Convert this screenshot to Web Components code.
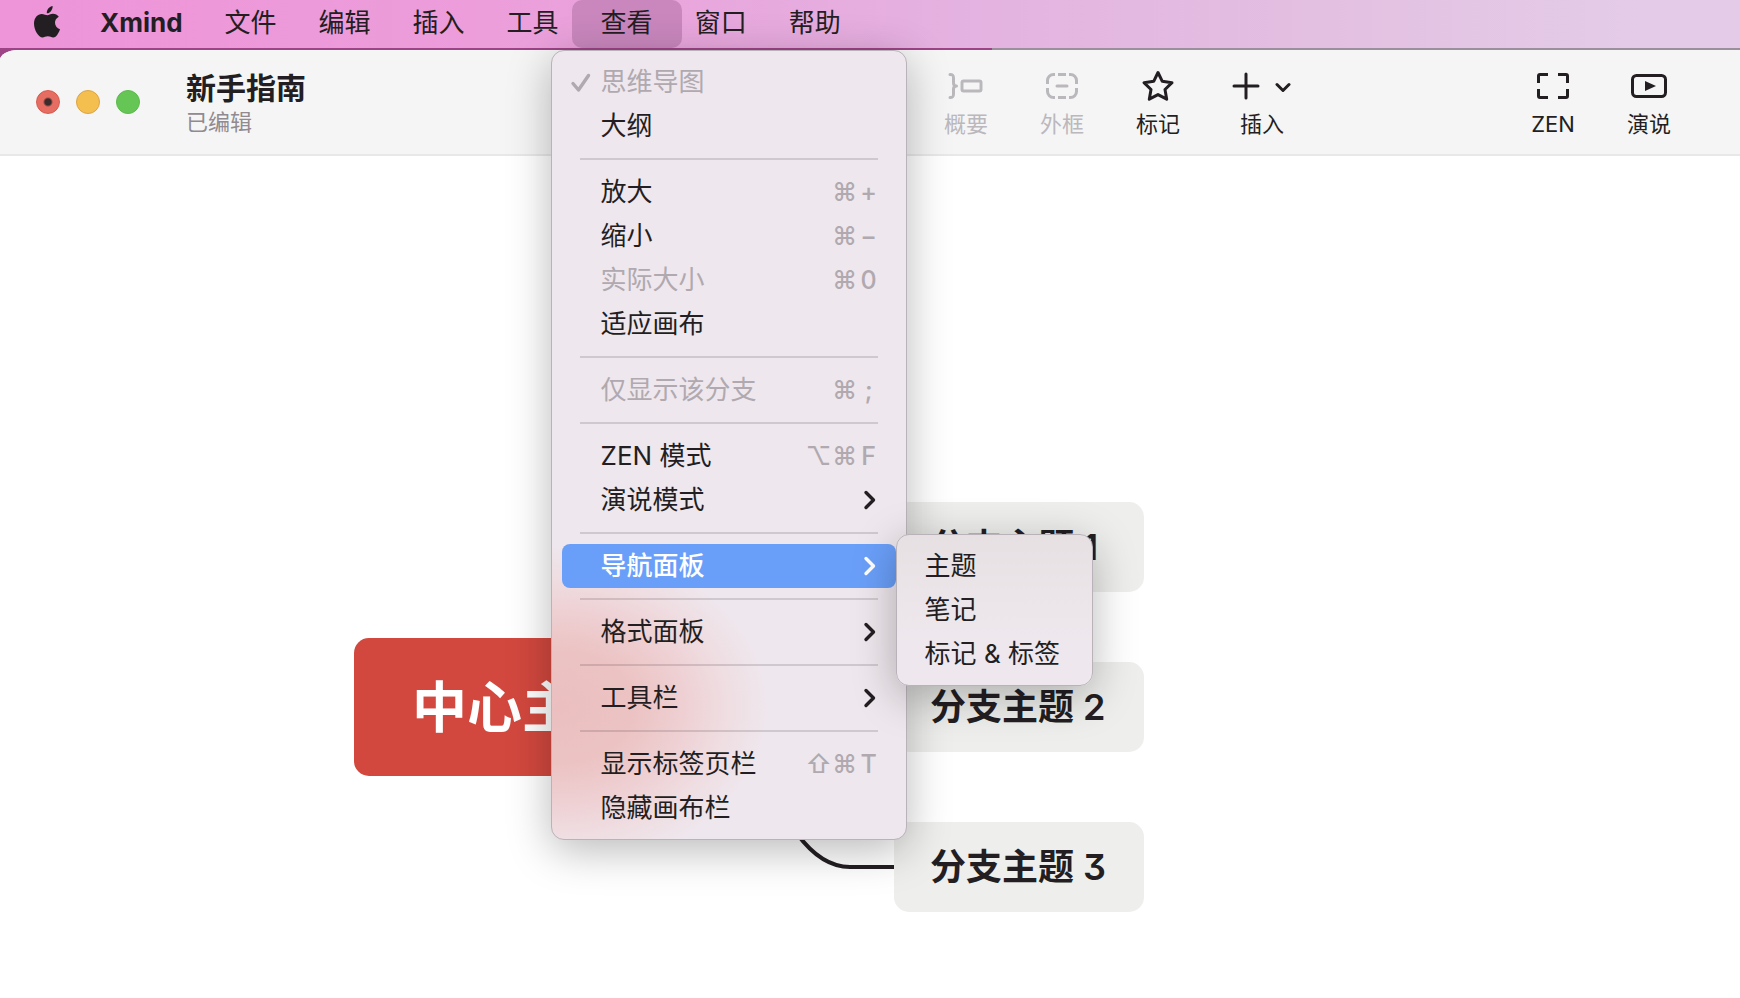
<!DOCTYPE html>
<html lang="zh-CN">
    <head>
        <meta charset="utf-8">
        <title>Xmind</title>
        <style>
            html, body {
                height: 100%;
            }
            body {
                margin: 0;
                display: flex;
                flex-direction: column;
                overflow: hidden;
                font-family: Inter, "Noto Sans CJK SC", sans-serif;
                color: #231e22;
                background: linear-gradient(to right, #9c4486 57%, #9a8f9b 57%);
            }
        </style>
    </head>
    <body>
        <menu-bar>
            <bar-item label="Xmind" strong></bar-item>
            <bar-item label="文件"></bar-item>
            <bar-item label="编辑"></bar-item>
            <bar-item label="插入"></bar-item>
            <bar-item label="工具"></bar-item>
            <bar-item label="查看" open>
                <pop-menu>
                    <menu-row checked disabled>思维导图</menu-row>
                    <menu-row>大纲</menu-row>
                    <menu-rule></menu-rule>
                    <menu-row keys="⌘ +">放大</menu-row>
                    <menu-row keys="⌘ −">缩小</menu-row>
                    <menu-row keys="⌘ 0" disabled>实际大小</menu-row>
                    <menu-row>适应画布</menu-row>
                    <menu-rule></menu-rule>
                    <menu-row keys="⌘ ;" disabled>仅显示该分支</menu-row>
                    <menu-rule></menu-rule>
                    <menu-row keys="⌥ ⌘ F">ZEN 模式</menu-row>
                    <menu-row parent>演说模式</menu-row>
                    <menu-rule></menu-rule>
                    <menu-row parent active>导航面板
                        <pop-menu slot="submenu" nested>
                            <menu-row>主题</menu-row>
                            <menu-row>笔记</menu-row>
                            <menu-row>标记 &amp; 标签</menu-row>
                        </pop-menu>
                    </menu-row>
                    <menu-rule></menu-rule>
                    <menu-row parent>格式面板</menu-row>
                    <menu-rule></menu-rule>
                    <menu-row parent>工具栏</menu-row>
                    <menu-rule></menu-rule>
                    <menu-row keys="⇧ ⌘ T">显示标签页栏</menu-row>
                    <menu-row>隐藏画布栏</menu-row>
                </pop-menu>
            </bar-item>
            <bar-item label="窗口"></bar-item>
            <bar-item label="帮助"></bar-item>
        </menu-bar>

        <app-window>
            <window-title slot="title" name="新手指南" state="已编辑"></window-title>
            <tool-button slot="tools" icon="summary" label="概要" disabled></tool-button>
            <tool-button slot="tools" icon="boundary" label="外框" disabled></tool-button>
            <tool-button slot="tools" icon="marker" label="标记"></tool-button>
            <tool-button slot="tools" icon="insert" label="插入" wide></tool-button>
            <tool-button slot="modes" icon="zen" label="ZEN"></tool-button>
            <tool-button slot="modes" icon="pitch" label="演说"></tool-button>
            <mind-canvas>
                <topic-node central style="left: 354px; top: 482px">中心主题</topic-node>
                <topic-node style="left: 894px; top: 346px">分支主题 1</topic-node>
                <topic-node style="left: 894px; top: 506px">分支主题 2</topic-node>
                <topic-node style="left: 894px; top: 666px">分支主题 3</topic-node>
            </mind-canvas>
        </app-window>

        <script>
            const ICONS = {
                summary: `<svg width="36" height="32" fill="none" stroke="currentColor" stroke-width="3" stroke-linecap="round" stroke-linejoin="round">
                    <path d="M2 4.500C5 4.500 5.500 5.500 5.500 8V13C5.500 15 6 16 8.500 16C6 16 5.500 17 5.500 19V24C5.500 26.500 5 27.500 2 27.500"/>
                    <rect x="14" y="11" width="19" height="10" rx="1.500"/></svg>`,
                boundary: `<svg width="36" height="32" fill="none" stroke="currentColor" stroke-width="3">
                    <path d="M3.500 14V10.500A6 6 0 0 1 9.500 4.500H11M14 4.500H22M25 4.500H26.500A6 6 0 0 1 32.500 10.500V14M32.500 18V21.500A6 6 0 0 1 26.500 27.500H25M22 27.500H14M11 27.500H9.500A6 6 0 0 1 3.500 21.500V18"/>
                    <path d="M13 16H23" stroke-linecap="round"/></svg>`,
                marker: `<svg width="36" height="32" fill="none" stroke="currentColor" stroke-width="3" stroke-linejoin="round">
                    <path d="M18 2.500L22.300 11.300L32 12.700L25 19.500L26.700 29.200L18 24.600L9.300 29.200L11 19.500L4 12.700L13.700 11.300Z"/></svg>`,
                insert: `<svg width="60" height="32" fill="none" stroke="currentColor" stroke-width="3" stroke-linecap="round" stroke-linejoin="round">
                    <path d="M2 16H26M14 4V28M45 14.500L51 20.500L57 14.500"/></svg>`,
                zen: `<svg width="36" height="32" fill="none" stroke="currentColor" stroke-width="3" stroke-linejoin="round">
                    <path d="M3.500 13V6A1.500 1.500 0 0 1 5 4.500H13M23 4.500H31A1.500 1.500 0 0 1 32.500 6V13M32.500 19V26A1.500 1.500 0 0 1 31 27.500H23M13 27.500H5A1.500 1.500 0 0 1 3.500 26V19"/></svg>`,
                pitch: `<svg width="36" height="32" fill="none" stroke="currentColor" stroke-width="3">
                    <rect x="1.500" y="5.500" width="33" height="21" rx="4"/>
                    <path d="M14 11L25 16L14 21Z" fill="currentColor" stroke="none"/></svg>`
            };

            class MenuBar extends HTMLElement {
                constructor() {
                    super();
                    const shadowRoot = this.attachShadow({ mode: 'open' });
                    shadowRoot.innerHTML = `
                        <style>
                            :host {
                                display: flex;
                                align-items: stretch;
                                flex: none;
                                height: 48px;
                                position: relative;
                                z-index: 2;
                                background: linear-gradient(to right, #ee94d9, #ec9dda 27%, #e4b2e0 55%, #e3c1e2 78%, #e4cce8 95%);
                            }
                            .apple {
                                flex: none;
                                margin: 6px 19px 0 34px;
                                color: #231e22;
                            }
                        </style>
                        <svg class="apple" width="26" height="32" viewBox="0 0 26 32" fill="currentColor" role="img" aria-label="Apple">
                            <path d="M18.600 0C18.800 2 18 3.900 16.900 5.200C15.800 6.500 14.300 7.400 12.800 7.200C12.600 5.300 13.500 3.500 14.500 2.300C15.600 1 17.300 .1 18.600 0Z"/>
                            <path d="M13.400 9.200C14.700 9.200 16.400 7.700 18.900 7.700C21.300 7.700 23.500 8.900 24.800 10.800C22.300 12.300 21 14.200 21 16.700C21 19.600 22.900 22.100 26 23.200C25.100 25.900 22.500 31.500 19.200 31.500C17.300 31.500 16.300 30.300 13.900 30.300C11.400 30.300 10.300 31.500 8.600 31.500C4.600 31.500 0 24.300 0 17.500C0 11.400 3.800 7.900 7.600 7.900C10 7.900 12 9.200 13.400 9.200Z"/>
                        </svg>
                        <slot></slot>
                    `;
                }
            }
            window.customElements.define('menu-bar', MenuBar);

            class BarItem extends HTMLElement {
                constructor() {
                    super();
                    const shadowRoot = this.attachShadow({ mode: 'open' });
                    shadowRoot.innerHTML = `
                        <style>
                            :host {
                                display: block;
                                position: relative;
                                margin: 0 -8px;
                            }
                            button {
                                height: 100%;
                                padding: 0 29px 2px;
                                border: 0;
                                border-radius: 10px;
                                background: none;
                                color: inherit;
                                font: 400 26px/36px Inter, "Noto Sans CJK SC", sans-serif;
                                white-space: nowrap;
                            }
                            :host([strong]) button {
                                font-weight: 700;
                            }
                            :host([open]) button {
                                background: #c987bd;
                            }
                            ::slotted(pop-menu) {
                                position: absolute;
                                left: -21px;
                                top: 50px;
                            }
                        </style>
                        <button type="button">${this.getAttribute('label')}</button>
                        <slot></slot>
                    `;
                }
            }
            window.customElements.define('bar-item', BarItem);

            class PopMenu extends HTMLElement {
                constructor() {
                    super();
                    const shadowRoot = this.attachShadow({ mode: 'open' });
                    shadowRoot.innerHTML = `
                        <style>
                            :host {
                                display: block;
                                box-sizing: border-box;
                                width: 356px;
                                padding: 9px 10px;
                                border: 1px solid #b9b2b9;
                                border-radius: 13px;
                                /* the red topic glows through the frosted panel */
                                background:
                                    radial-gradient(ellipse 205px 160px at 10px 656px, #ebbfbf, #ecc3c3 35%, #eecfd2 58%, #efdce0 78%, rgba(238, 231, 237, 0)),
                                    #eee7ed;
                                box-shadow: 0 10px 44px rgba(0, 0, 0, .28);
                                color: #231e22;
                                --indent: 39px;
                            }
                            :host([nested]) {
                                width: max-content;
                                min-width: 197px;
                                background: linear-gradient(#e6e0e3, #ebe5e9 40%, #eee7ed 70%);
                                --indent: 18px;
                            }
                        </style>
                        <slot></slot>
                    `;
                }
            }
            window.customElements.define('pop-menu', PopMenu);

            class MenuRow extends HTMLElement {
                constructor() {
                    super();
                    const keys = (this.getAttribute('keys') || '').split(' ').filter(Boolean);
                    const shadowRoot = this.attachShadow({ mode: 'open' });
                    shadowRoot.innerHTML = `
                        <style>
                            :host {
                                display: block;
                                position: relative;
                            }
                            :host([active]) {
                                z-index: 1;
                            }
                            button {
                                display: flex;
                                align-items: center;
                                position: relative;
                                width: 100%;
                                height: 44px;
                                padding: 0 18px 0 var(--indent);
                                border: 0;
                                border-radius: 8px;
                                background: none;
                                color: inherit;
                                font: 400 26px/36px Inter, "Noto Sans CJK SC", sans-serif;
                                white-space: nowrap;
                            }
                            :host([disabled]) button {
                                color: #b0a9af;
                            }
                            :host([active]) button {
                                background: #6a9ff9;
                                color: #fff;
                                font-weight: 500;
                            }
                            .check {
                                position: absolute;
                                left: 8px;
                                top: 13px;
                            }
                            .keys {
                                display: flex;
                                margin-left: auto;
                                color: #b0a9af;
                            }
                            kbd {
                                width: 26px;
                                font: 500 25px/36px Inter, "DejaVu Sans", sans-serif;
                                text-align: center;
                            }
                            kbd:last-child {
                                display: flex;
                                justify-content: center;
                                width: 18px;
                                margin-left: 2px;
                            }
                            .arrow {
                                margin-left: auto;
                            }
                            ::slotted(pop-menu) {
                                position: absolute;
                                left: 100%;
                                top: -10px;
                            }
                        </style>
                        <button type="button" ${this.hasAttribute('disabled') ? 'disabled' : ''}>
                            ${this.hasAttribute('checked') ? `<svg class="check" width="22" height="20" fill="none" stroke="currentColor" stroke-width="3.400" stroke-linecap="round" stroke-linejoin="round"><path d="M3 10.500L8.500 17L18.500 2.500"/></svg>` : ''}
                            <slot></slot>
                            ${keys.length ? `<span class="keys">${keys.map(key => `<kbd>${key}</kbd>`).join('')}</span>` : ''}
                            ${this.hasAttribute('parent') ? `<svg class="arrow" width="16" height="20" fill="none" stroke="currentColor" stroke-width="3.400" stroke-linecap="round" stroke-linejoin="round"><path d="M4 2.500L11.500 10L4 17.500"/></svg>` : ''}
                        </button>
                        <slot name="submenu"></slot>
                    `;
                }
            }
            window.customElements.define('menu-row', MenuRow);

            class MenuRule extends HTMLElement {
                constructor() {
                    super();
                    const shadowRoot = this.attachShadow({ mode: 'open' });
                    shadowRoot.innerHTML = `
                        <style>
                            :host {
                                display: block;
                                padding: 10px 18px;
                            }
                            hr {
                                height: 2px;
                                margin: 0;
                                border: 0;
                                background: rgba(60, 50, 60, .17);
                            }
                        </style>
                        <hr>
                    `;
                }
            }
            window.customElements.define('menu-rule', MenuRule);

            class AppWindow extends HTMLElement {
                constructor() {
                    super();
                    const shadowRoot = this.attachShadow({ mode: 'open' });
                    shadowRoot.innerHTML = `
                        <style>
                            :host {
                                display: flex;
                                flex-direction: column;
                                flex: 1;
                                min-height: 0;
                                margin-top: 2px;
                                border-top-left-radius: 18px 10px;
                                overflow: hidden;
                                background: #fff;
                            }
                            header {
                                display: grid;
                                grid-template-columns: 1fr 1fr;
                                flex: none;
                                height: 104px;
                                border-bottom: 2px solid #e8e8e8;
                                background: #f5f5f5;
                            }
                            .start, .end {
                                display: flex;
                                align-items: center;
                            }
                            .start {
                                padding-left: 36px;
                            }
                            .end {
                                padding: 6px 43px 0 48px;
                            }
                            .modes {
                                display: flex;
                                margin-left: auto;
                            }
                            .lights {
                                display: flex;
                                gap: 16px;
                                margin-right: 46px;
                            }
                            .lights button {
                                box-sizing: border-box;
                                width: 24px;
                                height: 24px;
                                padding: 0;
                                border: 1px solid #d8584c;
                                border-radius: 50%;
                                background: radial-gradient(circle, #3b2b2b 3px, #e66d61 5px);
                            }
                            .lights .min {
                                border-color: #dba545;
                                background: #f5bf4f;
                            }
                            .lights .max {
                                border-color: #5bba4b;
                                background: #65c656;
                            }
                        </style>
                        <header>
                            <div class="start">
                                <div class="lights">
                                    <button type="button" aria-label="关闭"></button>
                                    <button type="button" class="min" aria-label="最小化"></button>
                                    <button type="button" class="max" aria-label="缩放"></button>
                                </div>
                                <slot name="title"></slot>
                            </div>
                            <div class="end">
                                <slot name="tools"></slot>
                                <div class="modes"><slot name="modes"></slot></div>
                            </div>
                        </header>
                        <slot></slot>
                    `;
                }
            }
            window.customElements.define('app-window', AppWindow);

            class WindowTitle extends HTMLElement {
                constructor() {
                    super();
                    const shadowRoot = this.attachShadow({ mode: 'open' });
                    shadowRoot.innerHTML = `
                        <style>
                            :host {
                                display: block;
                            }
                            h1 {
                                margin: 0;
                                font-size: 30px;
                                line-height: 40px;
                                font-weight: 600;
                            }
                            p {
                                margin: 0;
                                font-size: 22px;
                                line-height: 28px;
                                color: #918a90;
                            }
                        </style>
                        <h1>${this.getAttribute('name')}</h1>
                        <p>${this.getAttribute('state')}</p>
                    `;
                }
            }
            window.customElements.define('window-title', WindowTitle);

            class ToolButton extends HTMLElement {
                constructor() {
                    super();
                    const shadowRoot = this.attachShadow({ mode: 'open' });
                    shadowRoot.innerHTML = `
                        <style>
                            :host {
                                display: block;
                                width: 96px;
                            }
                            :host([wide]) {
                                width: 112px;
                            }
                            button {
                                display: flex;
                                flex-direction: column;
                                align-items: center;
                                gap: 6px;
                                width: 100%;
                                padding: 0;
                                border: 0;
                                background: none;
                                color: inherit;
                                font: 400 22px/32px Inter, "Noto Sans CJK SC", sans-serif;
                            }
                            button:disabled {
                                color: #bbb8bd;
                            }
                            svg {
                                display: block;
                            }
                        </style>
                        <button type="button" ${this.hasAttribute('disabled') ? 'disabled' : ''}>
                            ${ICONS[this.getAttribute('icon')]}
                            <span>${this.getAttribute('label')}</span>
                        </button>
                    `;
                }
            }
            window.customElements.define('tool-button', ToolButton);

            class MindCanvas extends HTMLElement {
                constructor() {
                    super();
                    const shadowRoot = this.attachShadow({ mode: 'open' });
                    shadowRoot.innerHTML = `
                        <style>
                            :host {
                                display: block;
                                flex: 1;
                                position: relative;
                            }
                            svg {
                                position: absolute;
                                left: 0;
                                top: 0;
                            }
                        </style>
                        <svg width="100%" height="100%" fill="none" stroke="#231e22" stroke-width="4">
                            <path d="M690 551H894M730 551C770 624 795 711 850 711H894M730 551C770 478 795 391 850 391H894"/>
                        </svg>
                        <slot></slot>
                    `;
                }
            }
            window.customElements.define('mind-canvas', MindCanvas);

            class TopicNode extends HTMLElement {
                constructor() {
                    super();
                    const shadowRoot = this.attachShadow({ mode: 'open' });
                    shadowRoot.innerHTML = `
                        <style>
                            :host {
                                box-sizing: border-box;
                                position: absolute;
                                min-width: 250px;
                                padding: 20px 36px;
                                border-radius: 15px;
                                background: #eeeeec;
                                font-size: 36px;
                                line-height: 50px;
                                font-weight: 600;
                                font-feature-settings: "cv09";
                                white-space: nowrap;
                            }
                            :host([central]) {
                                padding: 29px 58px;
                                background: #d2483e;
                                color: #fff;
                                font-size: 55px;
                                line-height: 80px;
                            }
                        </style>
                        <slot></slot>
                    `;
                }
            }
            window.customElements.define('topic-node', TopicNode);
        </script>
    </body>
</html>
